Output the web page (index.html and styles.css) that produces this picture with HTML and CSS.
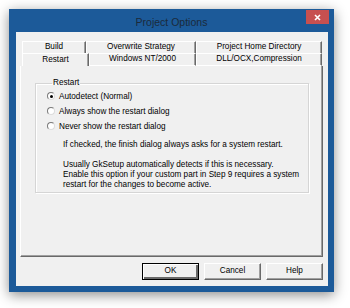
FILE: index.html
```html
<!DOCTYPE html>
<html>
<head>
<meta charset="utf-8">
<link rel="stylesheet" href="styles.css">
</head>
<body>
<div class="window">
  <div class="titlebar">
    <span class="title">Project Options</span>
    <div class="close"><svg width="7" height="7" viewBox="0 0 7 7"><path d="M1 1L6 6M6 1L1 6" stroke="#fff" stroke-width="1.6"/></svg></div>
  </div>
  <div class="client">
    <div class="tabs">
      <div class="row row-back">
        <div class="tab t1">Build</div>
        <div class="tab t2">Overwrite Strategy</div>
        <div class="tab t3">Project Home Directory</div>
      </div>
      <div class="row row-front">
        <div class="tab t1b selected">Restart</div>
        <div class="tab t2b">Windows NT/2000</div>
        <div class="tab t3">DLL/OCX,Compression</div>
      </div>
    </div>
    <div class="panel">
      <fieldset class="group">
        <legend>Restart</legend>
        <div class="radios">
          <label class="radio"><span class="dot checked"></span>Autodetect (Normal)</label>
          <label class="radio"><span class="dot"></span>Always show the restart dialog</label>
          <label class="radio"><span class="dot"></span>Never show the restart dialog</label>
        </div>
        <p class="hint">If checked, the finish dialog always asks for a system restart.</p>
        <p class="hint">Usually GkSetup automatically detects if this is necessary.<br>Enable this option if your custom part in Step 9 requires a system<br>restart for the changes to become active.</p>
      </fieldset>
    </div>
    <div class="buttons">
      <button class="btn default">OK</button>
      <button class="btn">Cancel</button>
      <button class="btn">Help</button>
    </div>
  </div>
</div>
</body>
</html>
```

FILE: styles.css
```css
* { box-sizing: border-box; }
html, body { margin: 0; background: #fff; }
body {
  width: 350px;
  height: 308px;
  padding: 9px 0 0 9px;
  font-family: "Liberation Sans", Arial, sans-serif;
  font-size: 8.2px;
  color: #000;
  overflow: hidden;
}
.window {
  width: 325px;
  height: 283px;
  background: #1c5a99;
  box-shadow: 0 3px 12px rgba(0,0,0,0.45);
  display: flex;
  flex-direction: column;
}
.titlebar {
  height: 23px;
  position: relative;
  display: flex;
  align-items: center;
  justify-content: center;
}
.title {
  font-size: 10.5px;
  color: #1b2a3b;
  margin-top: 2px;
}
.close {
  position: absolute;
  right: 5px;
  top: 1px;
  width: 23px;
  height: 14px;
  background: #c75050;
  display: flex;
  align-items: center;
  justify-content: center;
}
.close svg { display: block; }
.client {
  flex: 1;
  margin: 0 6px 6px 7px;
  background: #f0f0f0;
  padding: 9px 5px 6px 4px;
  display: flex;
  flex-direction: column;
}
.tabs { padding: 0 1px 0 2px; }
.row { display: flex; }
.row-back { height: 12px; }
.row-front { height: 13px; }
.tab {
  display: flex;
  align-items: center;
  justify-content: center;
  background: #f0f0f0;
  border-top: 1px solid #fff;
  border-left: 1px solid #fff;
  border-right: 1px solid #696969;
  box-shadow: inset -1px 0 #a0a0a0;
  line-height: 1;
}
.row-front .tab { border-bottom: 1px solid #fff; }
.row-front .tab.selected { border-bottom: none; }
.t1 { width: 64px; }
.t2 { width: 110px; }
.t3 { width: 126px; }
.t1b { width: 67px; }
.t2b { width: 107px; }
.panel {
  flex: 1;
  border-left: 1px solid #fff;
  border-right: 1px solid #696969;
  border-bottom: 1px solid #696969;
  box-shadow: inset -1px -1px #a0a0a0;
  padding: 13px 14px 0 14px;
}
.group {
  margin: 0;
  height: 114px;
  width: 274px;
  border: 1px solid #d5d5d5;
  box-shadow: 1px 1px #fff, inset 1px 1px #fff;
  padding: 4px 0 0 11px;
}
.group legend {
  padding: 0 1px;
  margin-left: 5px;
  line-height: 8px;
}
.radios { display: flex; flex-direction: column; gap: 5px; }
.radio {
  display: flex;
  align-items: center;
  gap: 4px;
  height: 10px;
}
.dot {
  width: 8px;
  height: 8px;
  border-radius: 50%;
  background: #fff;
  border: 1px solid;
  border-color: #7a7a7a #dcdcdc #dcdcdc #7a7a7a;
  display: flex;
  align-items: center;
  justify-content: center;
}
.dot.checked::after {
  content: "";
  width: 3px;
  height: 3px;
  border-radius: 50%;
  background: #000;
}
.hint {
  margin: 9px 0 0 16px;
  line-height: 10px;
}
.hint + .hint { margin-top: 10px; }
.buttons {
  display: flex;
  justify-content: flex-end;
  gap: 5px;
  margin-top: 6px;
}
.btn {
  width: 57px;
  height: 17px;
  margin: 0;
  padding: 0;
  font: inherit;
  color: #000;
  background: #f0f0f0;
  border: 1px solid;
  border-color: #fff #696969 #696969 #fff;
  box-shadow: inset -1px -1px #a0a0a0;
  line-height: 1;
}
.btn.default {
  outline: 1px solid #000;
  outline-offset: -1px;
  border-color: #000;
  box-shadow: inset 1px 1px #fff, inset -2px -2px #696969;
}
```
